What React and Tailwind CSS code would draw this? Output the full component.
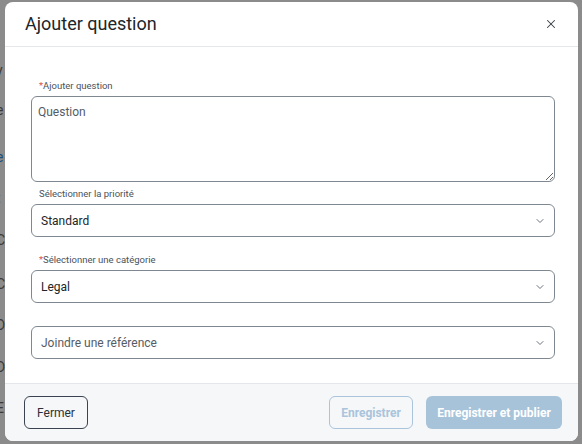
import { X, ChevronDown } from 'lucide-react';

const rows = [
    { t: 'y', y: 'top-[60px]', c: 'text-[#3a3a3a]' },
    { t: 'e', y: 'top-[100px]', c: 'text-[#3a3a3a]' },
    { t: 'e', y: 'top-[147px]', c: 'text-[#1f4f7a]' },
    { t: 't', y: 'top-[188px]', c: 'text-[#555]' },
    { t: 'C', y: 'top-[230px]', c: 'text-[#3a3a3a]' },
    { t: 'C', y: 'top-[274px]', c: 'text-[#3a3a3a]' },
    { t: 'D', y: 'top-[315px]', c: 'text-[#3a3a3a]' },
    { t: 'D', y: 'top-[357px]', c: 'text-[#3a3a3a]' },
    { t: 'E', y: 'top-[398px]', c: 'text-[#3a3a3a]' },
];

const Select = ({ value, placeholder }) => (
    <div className="flex items-center justify-between h-[33px] rounded-md border border-[#7f8891] pl-[9px] pr-[8px]">
        <span className={`text-[12px] ${placeholder ? 'text-[#555c64]' : 'text-[#212529]'}`}>{value}</span>
        <ChevronDown size={12} strokeWidth={2} className="text-[#6b7280]" />
    </div>
);

const Label = ({ children, required }) => (
    <div className="text-[9.5px] text-[#4b5259] pl-[8px] mb-[4px] leading-[12px]">
        {required && <span className="text-[#d9534f]">*</span>}
        {children}
    </div>
);

export default function App() {
    return (
        <div className="relative w-[582px] h-[444px] overflow-hidden bg-[#8b8b8b]" style={{ fontFamily: 'Roboto, "Liberation Sans", sans-serif' }}>
            {/* page behind the overlay */}
            {rows.map((r, i) => (
                <div key={i} className={`absolute left-[-4px] text-[14px] ${r.y} ${r.c}`}>{r.t}</div>
            ))}

            <div className="absolute left-[5px] top-[2px] w-[573px] h-[439px] bg-white rounded-lg flex flex-col overflow-hidden">
                <div className="flex items-center justify-between h-[45px] pl-5 pr-[20px] border-b border-[#e5e7eb]">
                    <h2 className="text-[18px] text-[#212529] leading-none">Ajouter question</h2>
                    <X size={14} strokeWidth={1.8} className="text-[#3a3f45]" />
                </div>

                <div className="flex-1 pl-[26px] pr-[23px] pt-[33px]">
                    <Label required>Ajouter question</Label>
                    <textarea
                        placeholder="Question"
                        className="block w-full h-[86px] mt-[2px] rounded-md border border-[#7f8891] px-[6px] py-[6px] text-[12px] text-[#212529] placeholder:text-[#555c64] outline-none"
                    />

                    <div className="mt-[6px]">
                        <Label>Sélectionner la priorité</Label>
                        <Select value="Standard" />
                    </div>

                    <div className="mt-[17px]">
                        <Label required>Sélectionner une catégorie</Label>
                        <Select value="Legal" />
                    </div>

                    <div className="mt-[23px]">
                        <Select value="Joindre une référence" placeholder />
                    </div>
                </div>

                <div className="flex items-center justify-between h-[58px] bg-[#f6f7f9] border-t border-[#e3e6ea] pl-[19px] pr-[16px]">
                    <button className="h-[33px] w-[64px] rounded-md border border-[#3b4350] text-[12px] font-normal text-[#2b3036]">
                        Fermer
                    </button>
                    <div className="flex gap-[13px]">
                        <button className="h-[33px] w-[84px] rounded-md border border-[#a9c4db] text-[12px] font-bold text-[#a9c4db] bg-transparent">
                            Enregistrer
                        </button>
                        <button className="h-[33px] w-[136px] rounded-md bg-[#a7c3da] text-[12px] font-bold text-white">
                            Enregistrer et publier
                        </button>
                    </div>
                </div>
            </div>
        </div>
    );
}
